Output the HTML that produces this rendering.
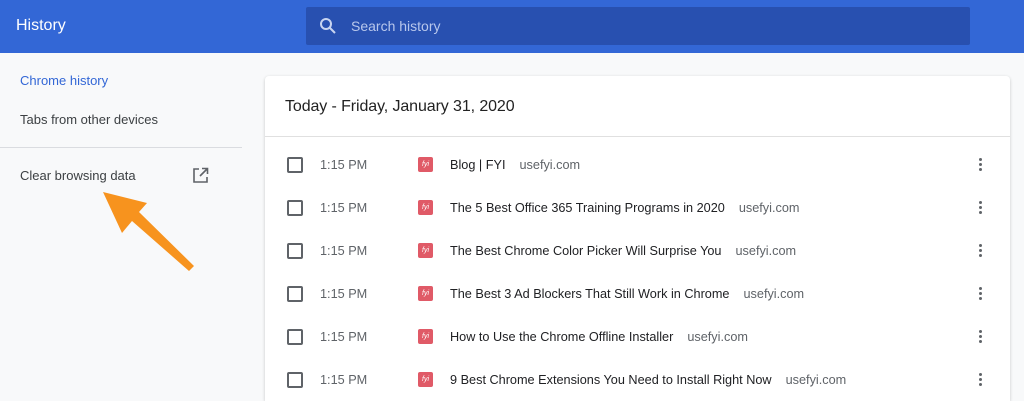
<!DOCTYPE html>
<html><head><style>
html,body{margin:0;width:1024px;height:401px;overflow:hidden}
body{background:#f8f9fa;font-family:"Liberation Sans",Arial,sans-serif;position:relative}
.top{position:absolute;left:0;top:0;width:1024px;height:53px;background:#3367d6}
.top .t{position:absolute;left:16px;top:17px;color:#fff;font-size:16px}
.search{position:absolute;left:306px;top:7px;width:664px;height:38px;background:#2850b0;border-radius:2px}
.search span{position:absolute;left:45px;top:11px;color:#b8c7ec;font-size:14px}
.side{position:absolute;font-size:13px;color:#3c4043}
.card{position:absolute;left:265px;top:76px;width:745px;height:325px;background:#fff;border-radius:4px 4px 0 0;box-shadow:0 1px 3px rgba(0,0,0,.2);overflow:hidden}
.hdr{height:60px;border-bottom:1px solid #e0e0e0;font-size:16px;color:#222;padding-left:20px;line-height:62px;letter-spacing:-0.1px}
.row{position:absolute;left:0;width:745px;height:43px;font-size:12.7px;color:#202124}
.cb{position:absolute;left:22px;top:-8px;width:12px;height:12px;border:2px solid #5f6368;border-radius:2px}
.tm{position:absolute;left:55px;top:-7px;color:#5f6368}
.fav{position:absolute;left:153px;top:-8px;width:15px;height:15px;background:#e05a67;border-radius:2px;color:#fff;font-size:7px;font-style:italic;text-align:center;line-height:15px}
.ti{position:absolute;left:185px;top:-7px;white-space:nowrap}
.ti i{font-style:normal;color:#5f6368;margin-left:14px}
.dots{position:absolute;left:714px;top:-7px;width:3px}
.dots b{display:block;width:3px;height:3px;background:#5f6368;border-radius:50%;margin-bottom:2px}
</style></head><body>
<div class="top"><div class="t">History</div>
<div class="search"><svg style="position:absolute;left:13px;top:10px" width="18" height="18" viewBox="0 0 18 18"><circle cx="7" cy="7" r="5" fill="none" stroke="#c8d4f0" stroke-width="2"/><path d="M11 11l5 5" stroke="#c8d4f0" stroke-width="2"/></svg><span>Search history</span></div></div>
<div class="side" style="left:20px;top:73px;color:#3367d6">Chrome history</div>
<div class="side" style="left:20px;top:112px">Tabs from other devices</div>
<div style="position:absolute;left:0;top:147px;width:242px;height:1px;background:#dadce0"></div>
<div class="side" style="left:20px;top:168px">Clear browsing data</div>
<svg style="position:absolute;left:192px;top:167px" width="17" height="17" viewBox="0 0 17 17"><path d="M7 2H2v13h13v-5" fill="none" stroke="#5f6368" stroke-width="1.6"/><path d="M10 1.5h5.5V7M15.5 1.5L8 9" fill="none" stroke="#5f6368" stroke-width="1.6"/></svg>
<svg style="position:absolute;left:0;top:0" width="250" height="300"><polygon points="103,192 147,203 139,212 194,266 189,271 132,221 122,233" fill="#f7931e"/></svg>
<div class="card"><div class="hdr">Today - Friday, January 31, 2020</div>
<div class="row" style="top:89px"><div class="cb"></div><div class="tm">1:15 PM</div><div class="fav">fyi</div><div class="ti">Blog | FYI<i>usefyi.com</i></div><div class="dots"><b></b><b></b><b></b></div></div>
<div class="row" style="top:132px"><div class="cb"></div><div class="tm">1:15 PM</div><div class="fav">fyi</div><div class="ti">The 5 Best Office 365 Training Programs in 2020<i>usefyi.com</i></div><div class="dots"><b></b><b></b><b></b></div></div>
<div class="row" style="top:175px"><div class="cb"></div><div class="tm">1:15 PM</div><div class="fav">fyi</div><div class="ti">The Best Chrome Color Picker Will Surprise You<i>usefyi.com</i></div><div class="dots"><b></b><b></b><b></b></div></div>
<div class="row" style="top:218px"><div class="cb"></div><div class="tm">1:15 PM</div><div class="fav">fyi</div><div class="ti">The Best 3 Ad Blockers That Still Work in Chrome<i>usefyi.com</i></div><div class="dots"><b></b><b></b><b></b></div></div>
<div class="row" style="top:261px"><div class="cb"></div><div class="tm">1:15 PM</div><div class="fav">fyi</div><div class="ti">How to Use the Chrome Offline Installer<i>usefyi.com</i></div><div class="dots"><b></b><b></b><b></b></div></div>
<div class="row" style="top:304px"><div class="cb"></div><div class="tm">1:15 PM</div><div class="fav">fyi</div><div class="ti">9 Best Chrome Extensions You Need to Install Right Now<i>usefyi.com</i></div><div class="dots"><b></b><b></b><b></b></div></div>
</div>
</body></html>
